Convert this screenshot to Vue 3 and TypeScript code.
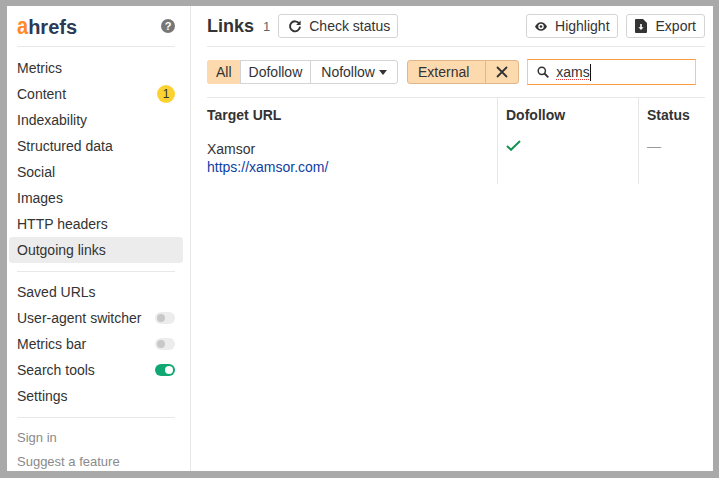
<script setup lang="ts">
interface NavItem { label: string; badge?: string; active?: boolean; toggle?: 'on' | 'off' }
const primary: NavItem[] = [
  { label: 'Metrics' },
  { label: 'Content', badge: '1' },
  { label: 'Indexability' },
  { label: 'Structured data' },
  { label: 'Social' },
  { label: 'Images' },
  { label: 'HTTP headers' },
  { label: 'Outgoing links', active: true },
]
const secondary: NavItem[] = [
  { label: 'Saved URLs' },
  { label: 'User-agent switcher', toggle: 'off' },
  { label: 'Metrics bar', toggle: 'off' },
  { label: 'Search tools', toggle: 'on' },
  { label: 'Settings' },
]
</script>

<template>
  <div class="frame">
    <div class="window">
      <aside class="sidebar">
        <div class="brand">
          <span class="logo"><span class="logo-a">a</span>hrefs</span>
          <span class="help">?</span>
        </div>
        <nav class="nav">
          <div v-for="item in primary" :key="item.label" class="nav-item" :class="{ active: item.active }">
            <span>{{ item.label }}</span>
            <span v-if="item.badge" class="badge">{{ item.badge }}</span>
          </div>
        </nav>
        <div class="side-rule"></div>
        <nav class="nav second-nav">
          <div v-for="item in secondary" :key="item.label" class="nav-item">
            <span>{{ item.label }}</span>
            <span v-if="item.toggle" class="toggle" :class="item.toggle"><i></i></span>
          </div>
        </nav>
        <div class="side-rule"></div>
        <div class="muted-links">
          <div>Sign in</div>
          <div>Suggest a feature</div>
        </div>
      </aside>

      <main class="main">
        <header class="head">
          <h1>Links</h1>
          <span class="count">1</span>
          <button class="btn check">
            <svg width="14" height="14" viewBox="0 0 14 14" fill="none">
              <path d="M11.2 4.600A5 5 0 1 0 12 7.600" stroke="#333" stroke-width="1.900" />
              <path d="M12.600 1.400v4.500H8.100z" fill="#333" />
            </svg>
            Check status
          </button>
          <span class="spacer"></span>
          <button class="btn highlight">
            <svg width="12" height="9" viewBox="0 0 14 10">
              <path fill-rule="evenodd" d="M7 0c3.200 0 5.600 2.300 7 5-1.400 2.700-3.800 5-7 5S1.400 7.700 0 5c1.400-2.700 3.800-5 7-5zm0 1.800a3.200 3.200 0 1 0 0 6.400 3.200 3.200 0 0 0 0-6.400z" fill="#333" />
              <circle cx="7" cy="5" r="1.600" fill="#333" />
            </svg>
            Highlight
          </button>
          <button class="btn export">
            <svg width="12" height="14" viewBox="0 0 12 14">
              <path fill-rule="evenodd" d="M1 0h7l4 4v9a1 1 0 0 1-1 1H1a1 1 0 0 1-1-1V1a1 1 0 0 1 1-1zm4.200 5v3.200H3.400L6 11l2.600-2.800H6.800V5z" fill="#333" />
            </svg>
            Export
          </button>
        </header>

        <div class="filters">
          <div class="seg">
            <span class="seg-item on">All</span>
            <span class="seg-item">Dofollow</span>
            <span class="seg-item nofollow">Nofollow <b class="caret"></b></span>
          </div>
          <div class="chip">
            <span class="chip-label">External</span>
            <span class="chip-close">
              <svg width="12" height="12" viewBox="0 0 12 12">
                <path d="M1 1l10 10M11 1L1 11" stroke="#333" stroke-width="1.800" />
              </svg>
            </span>
          </div>
          <div class="search">
            <svg width="12" height="12" viewBox="0 0 12 12" fill="none">
              <circle cx="4.800" cy="4.800" r="3.600" stroke="#333" stroke-width="1.500" />
              <path d="M7.500 7.500l3.800 3.800" stroke="#333" stroke-width="1.800" />
            </svg>
            <span class="query">xams</span><span class="caret-line"></span>
          </div>
        </div>

        <div class="table">
          <div class="col url">
            <div class="th">Target URL</div>
            <div class="td">
              <div>Xamsor</div>
              <a class="link">https://xamsor.com/</a>
            </div>
          </div>
          <div class="col dofollow">
            <div class="th">Dofollow</div>
            <div class="td">
              <svg class="tick" width="15" height="11" viewBox="0 0 15 11" fill="none">
                <path d="M1 6l4 3.800L14 1" stroke="#13934f" stroke-width="2" />
              </svg>
            </div>
          </div>
          <div class="col status">
            <div class="th">Status</div>
            <div class="td dash">—</div>
          </div>
        </div>
      </main>
    </div>
  </div>
</template>

<style>
html, body { margin: 0; }
</style>

<style scoped>
.frame {
  width: 719px;
  height: 478px;
  box-sizing: border-box;
  padding: 6px 6px 7px 7px;
  background: #a9a9a9;
  font-family: "Liberation Sans", Arial, sans-serif;
  font-size: 14px;
  color: #333;
}
.window {
  display: flex;
  height: 465px;
  background: #fff;
  overflow: hidden;
}
.sidebar {
  flex: none;
  width: 184px;
  height: 465px;
  box-sizing: border-box;
  padding: 0 7px 0 2px;
  border-right: 1px solid #e6e6e6;
}
.brand {
  display: flex;
  align-items: center;
  justify-content: space-between;
  height: 40px;
  margin: 0 8px;
  border-bottom: 1px solid #e8e8e8;
}
.logo {
  font-size: 20px;
  font-weight: 700;
  color: #2b3a55;
  line-height: 1;
  margin-top: 1px;
}
.logo-a {
  display: inline-block;
  color: #ff8a2b;
  transform: scaleY(1.2);
  transform-origin: 50% 82%;
}
.help {
  width: 14px;
  height: 14px;
  border-radius: 50%;
  background: #777;
  color: #fff;
  font-size: 11px;
  font-weight: 700;
  line-height: 14px;
  text-align: center;
}
.nav { margin-top: 8px; }
.second-nav { margin-top: 7px; }
.nav-item {
  display: flex;
  align-items: center;
  justify-content: space-between;
  height: 26px;
  padding: 0 8px;
  border-radius: 3px;
}
.nav-item.active { background: #ececec; }
.badge {
  width: 18px;
  height: 18px;
  border-radius: 50%;
  background: #fcd232;
  font-size: 12px;
  line-height: 18px;
  text-align: center;
}
.toggle {
  display: flex;
  align-items: center;
  width: 20px;
  height: 12px;
  border-radius: 6px;
  background: #ececec;
}
.toggle i {
  width: 8px;
  height: 8px;
  margin-left: 2px;
  border-radius: 50%;
  background: #c8c8c8;
}
.toggle.on { background: #10a872; justify-content: flex-end; }
.toggle.on i { background: #fff; margin: 0 2px 0 0; }
.side-rule {
  height: 1px;
  margin: 8px 8px 0;
  background: #e8e8e8;
}
.muted-links {
  margin: 8px 8px 0;
  color: #8a8a8a;
  font-size: 13px;
  line-height: 24px;
}
.main {
  flex: 1;
  min-width: 0;
  padding: 0 8px 0 16px;
}
.head {
  display: flex;
  align-items: center;
  gap: 8px;
  height: 40px;
  border-bottom: 1px solid #e8e8e8;
}
.head h1 {
  margin: 0;
  font-size: 18px;
  font-weight: 700;
  color: #333;
}
.count { color: #666; font-size: 13px; margin-left: 1px; }
.spacer { flex: 1; }
.btn {
  display: flex;
  align-items: center;
  height: 24px;
  box-sizing: border-box;
  border: 1px solid #d4d4d4;
  border-radius: 3px;
  background: #fff;
  font: inherit;
  color: #333;
}
.check { gap: 7px; padding: 0 7px 0 9px; }
.highlight { gap: 8px; padding: 0 7px 0 8px; }
.export { gap: 9px; padding: 0 8px; }
.filters {
  display: flex;
  align-items: center;
  height: 24px;
  margin-top: 13px;
}
.seg {
  display: flex;
  height: 24px;
  box-sizing: border-box;
  border: 1px solid #d4d4d4;
  border-radius: 3px;
}
.seg-item {
  display: flex;
  align-items: center;
  padding: 0 8px;
  border-left: 1px solid #d4d4d4;
}
.seg-item:first-child { border-left: 0; }
.seg-item.on {
  margin: -1px 0 -1px -1px;
  padding: 0 8px 0 9px;
  background: #fdd9ae;
  border-radius: 3px 0 0 3px;
}
.nofollow { padding: 0 10px; gap: 4px; }
.caret {
  width: 0;
  height: 0;
  border: 4px solid transparent;
  border-top: 5px solid #333;
  border-bottom: 0;
}
.chip {
  display: flex;
  height: 24px;
  box-sizing: border-box;
  margin-left: 9px;
  border: 1px solid #dfb78a;
  border-radius: 3px;
  background: #fdd9ae;
}
.chip-label {
  display: flex;
  align-items: center;
  padding: 0 16px 0 10px;
}
.chip-close {
  display: flex;
  align-items: center;
  justify-content: center;
  width: 32px;
  border-left: 1px solid #dfb78a;
}
.search {
  display: flex;
  align-items: center;
  width: 169px;
  height: 26px;
  box-sizing: border-box;
  margin-left: 8px;
  padding-left: 9px;
  border: 1px solid #fc9a3e;
  border-left-color: #fdc590;
  border-right-color: #fdc590;
}
.query {
  margin-left: 7px;
  text-decoration: underline dotted #e33;
  text-decoration-thickness: 1px;
  text-underline-offset: 2px;
}
.caret-line {
  width: 1px;
  height: 17px;
  background: #111;
}
.table {
  display: flex;
  margin-top: 13px;
  border-top: 1px solid #e8e8e8;
  height: 86px;
}
.col { box-sizing: border-box; }
.col + .col { border-left: 1px solid #e6e6e6; padding-left: 8px; }
.url { width: 290px; }
.dofollow { width: 141px; }
.status { flex: 1; }
.th {
  margin-top: 8px;
  height: 18px;
  line-height: 18px;
  font-weight: 700;
}
.td {
  margin-top: 16px;
  line-height: 18px;
}
.link { color: #0f3ea1; display: block; }
.tick { display: block; margin-top: 0; }
.dash { color: #999; margin-top: 13px; }
</style>
